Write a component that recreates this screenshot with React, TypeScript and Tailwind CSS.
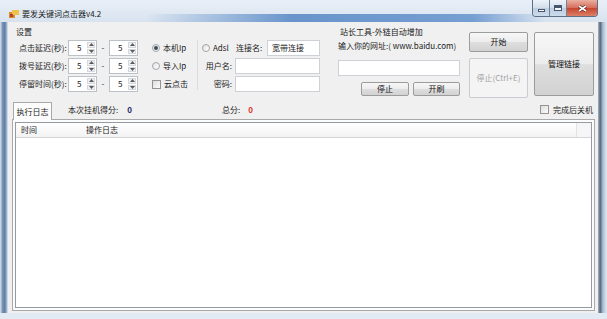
import React from "react";

function Spin() {
  return (
    <div className="w-[29px] h-[16px] flex border border-[#bcc1c7] bg-white">
      <span className="flex-1 pl-[8px] leading-[14px]">5</span>
      <div className="w-[8px] my-[1px] mr-[1px] flex flex-col gap-px">
        <div className="flex-1 flex items-center justify-center bg-[#eef0f2] border border-[#d5d8dc]">
          <svg width="5" height="3" viewBox="0 0 5 3">
            <path d="M2.5 0 L5 3 L0 3 Z" fill="#5a5a5a" />
          </svg>
        </div>
        <div className="flex-1 flex items-center justify-center bg-[#eef0f2] border border-[#d5d8dc]">
          <svg width="5" height="3" viewBox="0 0 5 3">
            <path d="M0 0 L5 0 L2.5 3 Z" fill="#5a5a5a" />
          </svg>
        </div>
      </div>
    </div>
  );
}

function Radio({ checked }: { checked?: boolean }) {
  return (
    <span className="w-[8px] h-[8px] shrink-0 rounded-full border border-[#a0a5ab] bg-[linear-gradient(135deg,#e2e2e2,#ffffff)] flex items-center justify-center">
      {checked && <span className="w-[4px] h-[4px] rounded-full bg-[#3d4b5c]" />}
    </span>
  );
}

function Check() {
  return <span className="w-[9px] h-[9px] shrink-0 border border-[#949494] bg-[linear-gradient(135deg,#dedede,#fbfbfb)]" />;
}

function TextBox({ className, value }: { className: string; value?: string }) {
  return (
    <div className={`h-[16px] border border-[#cdd1d6] bg-white pl-[4px] leading-[14px] ${className}`}>{value}</div>
  );
}

function Btn({ children, className, disabled }: { children: React.ReactNode; className: string; disabled?: boolean }) {
  const look = disabled
    ? "border-[#c9ccd0] bg-[#f4f4f4] text-[#a2a2a2]"
    : "border-[#9c9c9c] bg-[linear-gradient(to_bottom,#f7f7f7_0%,#ececec_50%,#dedede_51%,#d2d2d2_100%)] text-[#111]";
  return (
    <div className={`flex items-center justify-center rounded-[2px] border ${look} ${className}`}>{children}</div>
  );
}

function TitleBar() {
  return (
    <div className="h-[22px] flex items-start [background:linear-gradient(to_right,rgba(110,155,210,0)_24%,rgba(84,134,197,0.85)_48%,rgba(92,141,202,0.8)_78%,rgba(110,155,210,0)_90%)_bottom/100%_8px_no-repeat,linear-gradient(to_bottom,#e9eff7,#d8e3ef)]">
      <svg className="ml-[9px] mt-[10px]" width="10" height="8" viewBox="0 0 10 8">
        <rect x="0" y="2" width="6" height="6" fill="#d98a2b" />
        <rect x="3" y="0" width="7" height="5" fill="#f2c14a" />
        <rect x="1" y="4" width="3" height="3" fill="#b3462a" />
      </svg>
      <span className="ml-[3px] mt-[9px] leading-[10px] text-[#1a1a1a]">要发关键词点击器v4.2</span>
      <div className="ml-auto mr-[9px] flex h-[17px] rounded-b-[4px] overflow-hidden border border-t-0 border-[#5d6f86]">
        <div className="w-[17px] flex items-center justify-center bg-[linear-gradient(to_bottom,#eef3f9,#d3deea_50%,#bccde0_51%,#cddcec)] border-r border-[#6f8298]">
          <span className="w-[7px] h-[3px] mt-[4px] bg-white border border-[#47566a]" />
        </div>
        <div className="w-[17px] flex items-center justify-center bg-[linear-gradient(to_bottom,#eef3f9,#d3deea_50%,#bccde0_51%,#cddcec)] border-r border-[#6f8298]">
          <span className="w-[8px] h-[6px] border border-[#47566a] bg-[#f4f7fb] shadow-[inset_0_2px_0_#47566a]" />
        </div>
        <div className="w-[30px] flex items-center justify-center bg-[linear-gradient(to_bottom,#eab0a2,#d66c57_50%,#c8442d_51%,#dc8068)]">
          <svg width="9" height="7" viewBox="0 0 9 7">
            <path d="M1 1 L8 6 M8 1 L1 6" stroke="#5a2418" strokeWidth="3" />
            <path d="M1 1 L8 6 M8 1 L1 6" stroke="#ffffff" strokeWidth="1.6" />
          </svg>
        </div>
      </div>
    </div>
  );
}

function TopSection() {
  const delays = ["点击延迟(秒):", "拨号延迟(秒):", "停留时间(秒):"];
  return (
    <div className="flex h-[78px]">
      <div className="ml-[8px] w-[314px] pt-[5px] flex flex-col">
        <div className="h-[10px]">设置</div>
        <div className="mt-[3px] flex">
          <div className="ml-[3px] flex flex-col gap-[2px]">
            {delays.map((label) => (
              <div key={label} className="h-[16px] flex items-center">
                <span className="w-[49px]">{label}</span>
                <Spin />
                <span className="w-[12px] text-center">-</span>
                <Spin />
              </div>
            ))}
          </div>
          <div className="ml-[14px] w-[45px] flex flex-col gap-[2px]">
            <div className="h-[16px] flex items-center">
              <Radio checked />
              <span className="ml-[3px]">本机Ip</span>
            </div>
            <div className="h-[16px] flex items-center">
              <Radio />
              <span className="ml-[3px]">导入Ip</span>
            </div>
            <div className="h-[16px] flex items-center">
              <Check />
              <span className="ml-[3px]">云点击</span>
            </div>
          </div>
          <div className="w-px h-[50px] bg-[#dadada]" />
          <div className="flex flex-col gap-[2px]">
            <div className="h-[16px] flex items-center">
              <span className="ml-[4px]">
                <Radio />
              </span>
              <span className="ml-[3px] w-[23px]">Adsl</span>
              <span className="w-[31px]">连接名:</span>
              <TextBox className="w-[53px]" value="宽带连接" />
            </div>
            <div className="h-[16px] flex items-center">
              <span className="w-[34px] text-right">用户名:</span>
              <TextBox className="ml-[3px] w-[85px]" />
            </div>
            <div className="h-[16px] flex items-center">
              <span className="w-[34px] text-right">密码:</span>
              <TextBox className="ml-[3px] w-[85px]" />
            </div>
          </div>
        </div>
      </div>

      <div className="ml-[8px] w-[122px] pt-[5px] flex flex-col">
        <div className="ml-[2px] h-[10px]">站长工具-外链自动增加</div>
        <div className="mt-[4px] h-[10px] whitespace-nowrap">输入你的网址:( www.baidu.com)</div>
        <TextBox className="mt-[9px] w-[122px] h-[14px]" />
        <div className="mt-[6px] h-[14px] flex">
          <Btn className="ml-[23px] w-[48px]">停止</Btn>
          <Btn className="ml-[4px] w-[47px]">开刷</Btn>
        </div>
      </div>

      <div className="ml-[9px] w-[59px] pt-[10px] flex flex-col">
        <Btn className="h-[20px]">开始</Btn>
        <Btn className="mt-[6px] h-[40px]" disabled>
          停止(Ctrl+E)
        </Btn>
      </div>

      <Btn className="ml-[6px] mt-[10px] w-[60px] h-[64px]">管理链接</Btn>
    </div>
  );
}

function TabRow() {
  return (
    <div className="h-[19px] flex items-center">
      <div className="relative z-10 self-end ml-[5px] mb-[-1px] w-[39px] h-[18px] border border-b-0 border-[#a9a9a9] bg-[#fcfcfc] flex items-center justify-center">
        执行日志
      </div>
      <div className="ml-[16px] w-[154px] flex items-center">
        <span>本次挂机得分:</span>
        <span className="ml-[9px] font-bold text-[#1d2a6a]">0</span>
      </div>
      <div className="flex items-center">
        <span>总分:</span>
        <span className="ml-[8px] font-bold text-[#e0352c]">0</span>
      </div>
      <div className="ml-auto mr-[5px] flex items-center">
        <Check />
        <span className="ml-[4px]">完成后关机</span>
      </div>
    </div>
  );
}

function LogPanel() {
  return (
    <div className="ml-[4px] mr-[3px] h-[192px] border border-[#a9a9a9] bg-[#fcfcfc] p-[2px]">
      <div className="h-full border border-[#959ba3] bg-white flex flex-col">
        <div className="h-[15px] flex items-center border-b border-[#d5d5d5] bg-[linear-gradient(to_bottom,#ffffff,#f3f3f3)]">
          <span className="pl-[5px] w-[70px]">时间</span>
          <span>操作日志</span>
          <div className="ml-auto w-[15px] h-full border-l border-[#e3e3e3] bg-[#f6f6f6]" />
        </div>
      </div>
    </div>
  );
}

export default function App() {
  return (
    <div className="w-[607px] h-[319px] flex flex-col overflow-hidden text-[8px] leading-[10px] text-[#1b1b1b] [font-family:'Noto_Sans_CJK_SC',sans-serif]">
      <TitleBar />
      <div className="flex h-[291px]">
        <div className="w-[8px] bg-[linear-gradient(to_right,#dde7f2,#7b96b6_30%,#5e7ea2_60%,#a3b9d1_85%,#e6edf5)]" />
        <div className="w-[590px] bg-[#f0f0f0] flex flex-col">
          <TopSection />
          <TabRow />
          <LogPanel />
        </div>
        <div className="w-[9px] bg-[linear-gradient(to_right,#a7b4c2,#55677b_25%,#aebfd2_55%,#e0e9f3)]" />
      </div>
      <div className="h-[6px] bg-[#e2eaf3]" />
    </div>
  );
}
